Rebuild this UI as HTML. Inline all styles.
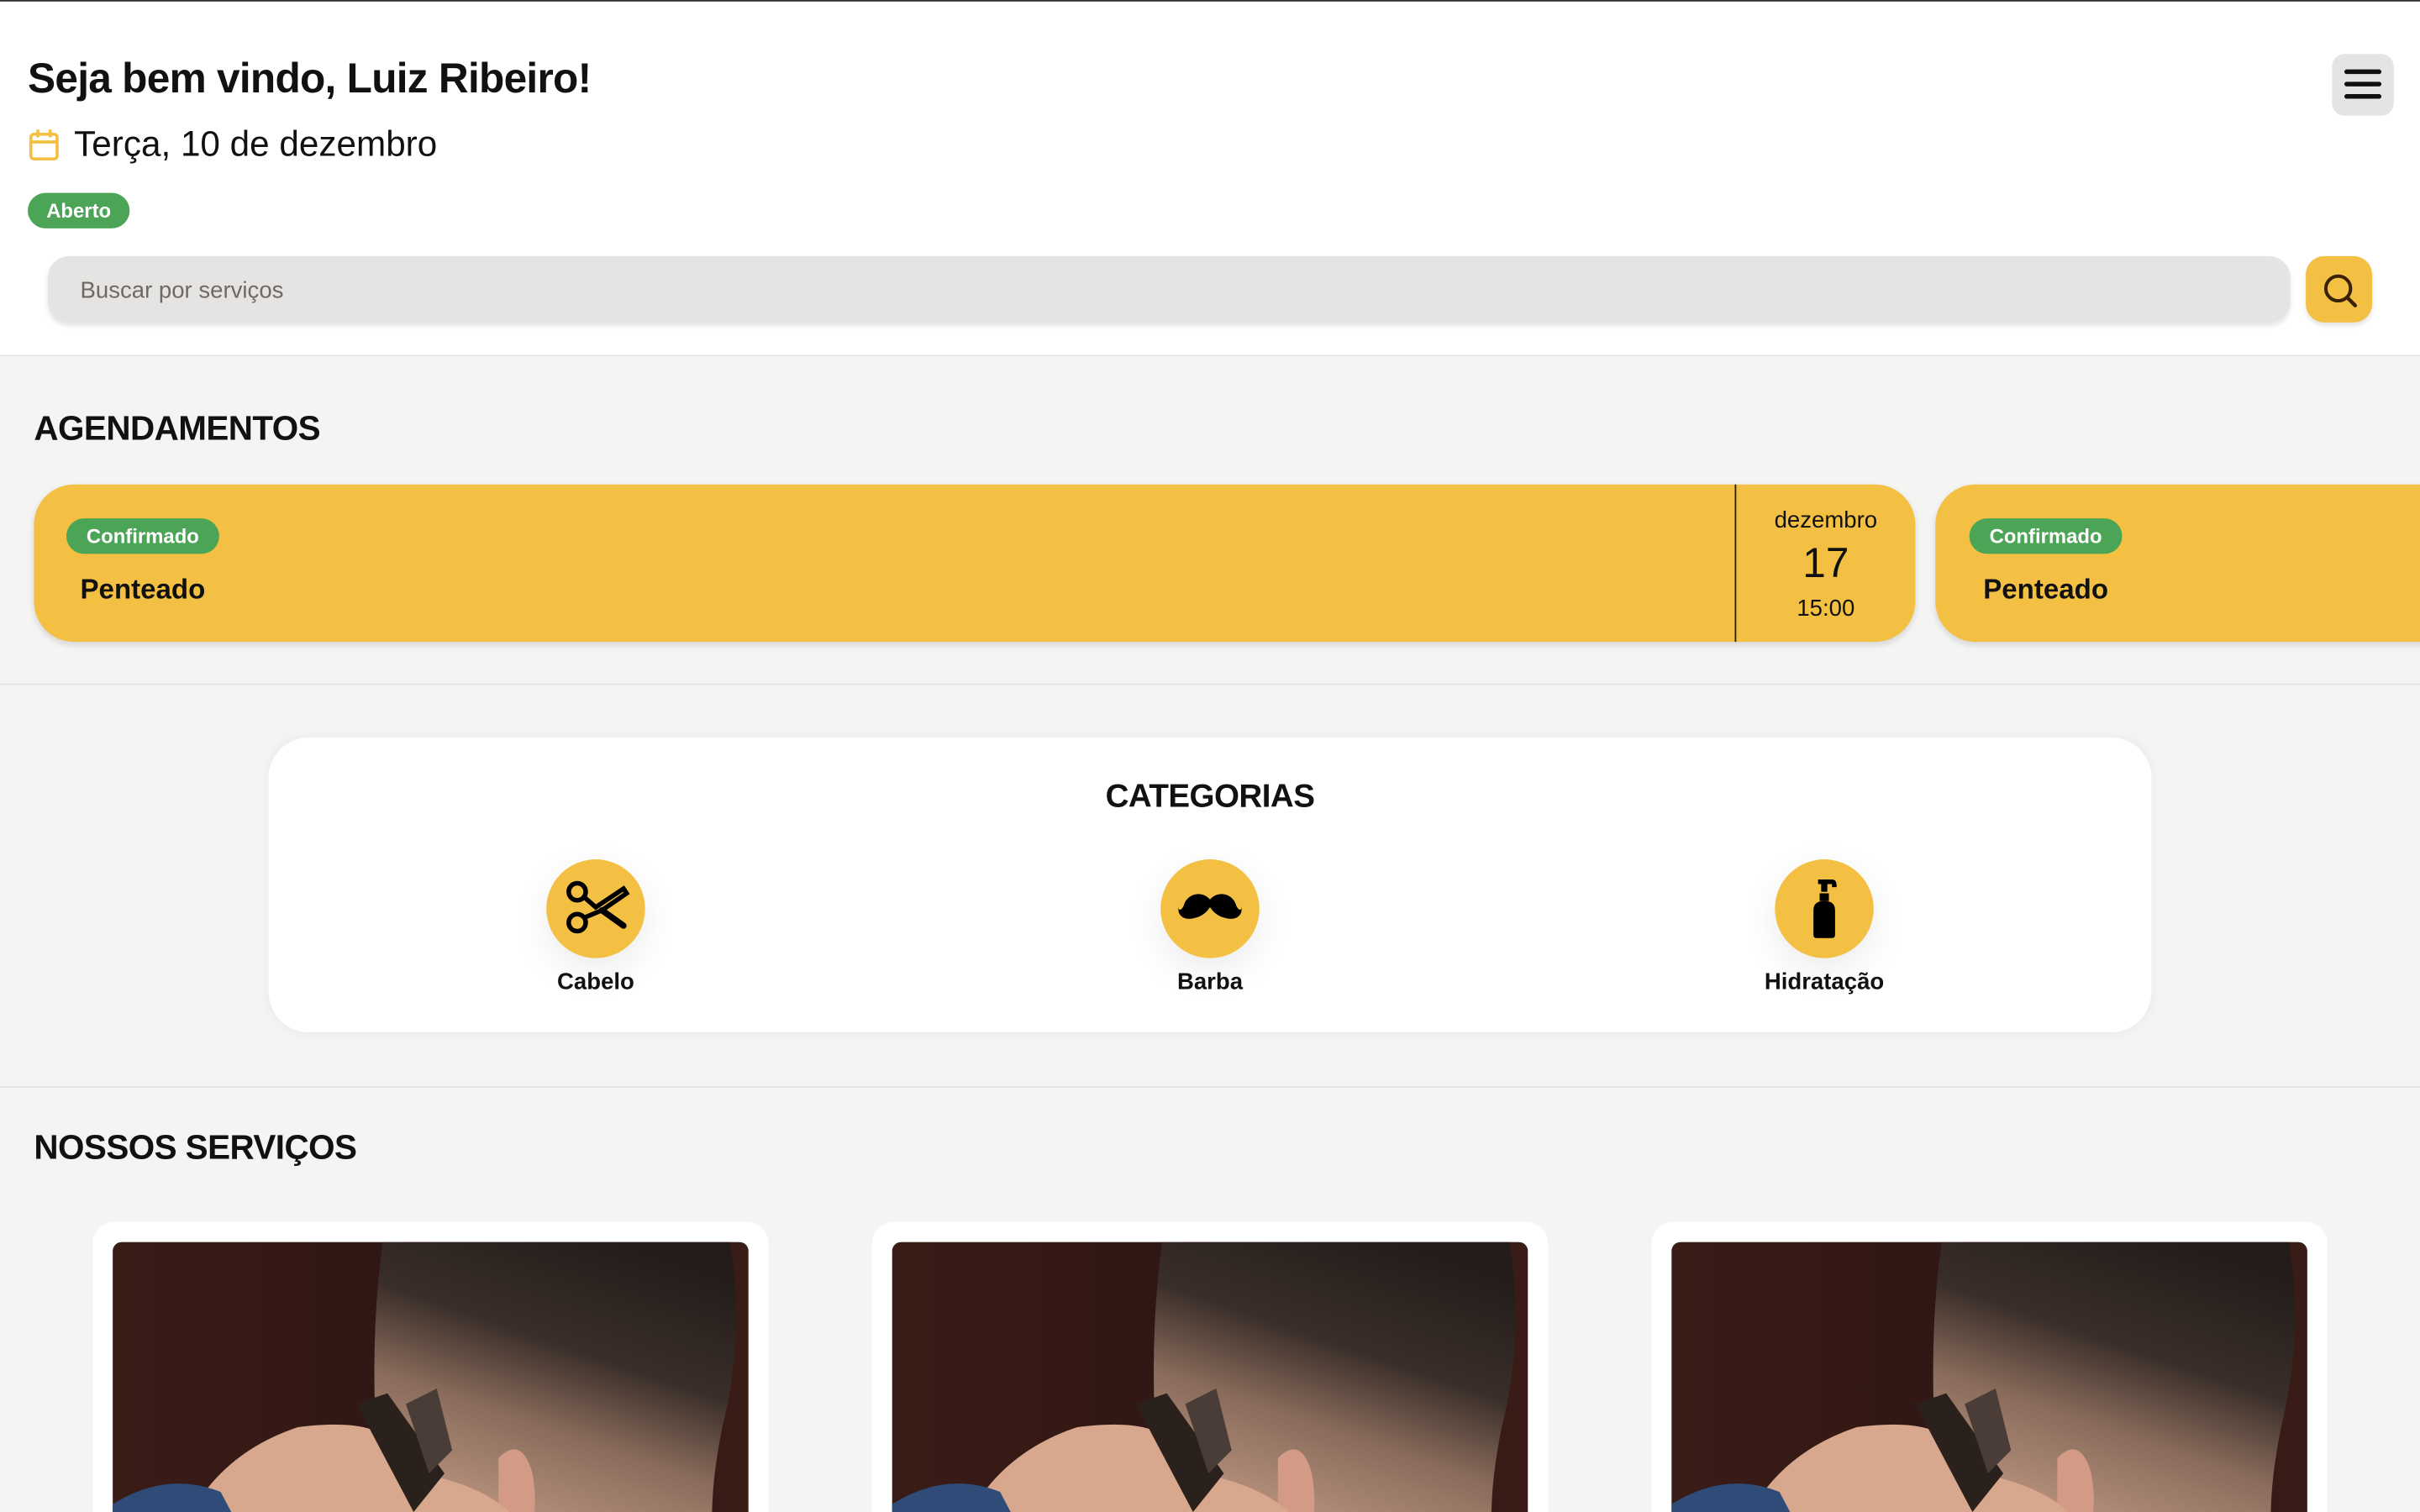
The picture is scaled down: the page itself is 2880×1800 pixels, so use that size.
<!DOCTYPE html>
<html><head><meta charset="utf-8">
<style>
html,body{margin:0;padding:0;width:2880px;height:1800px;overflow:hidden;background:#f4f4f3}
#w{width:1568px;height:980px;transform:scale(1.836735);transform-origin:0 0;position:relative;font-family:"Liberation Sans",sans-serif;color:#111;background:#f4f4f3;overflow:hidden}
.a{position:absolute}
.hdr{left:0;top:0;width:1568px;height:231px;background:#fff;border-top:1px solid #333;box-sizing:border-box;border-bottom:1px solid #e4e4e4}
.badge{background:#4ca456;color:#fff;font-weight:bold;border-radius:12px;font-size:13px;text-align:center}
.card{background:#f3c043;border-radius:26px;box-shadow:0 2px 4px rgba(0,0,0,.12)}
.cat{width:64px;height:64px;border-radius:50%;background:#f3c043;box-shadow:0 8px 24px rgba(0,0,0,.08)}
.catl{font-weight:bold;font-size:15px;text-align:center;width:200px}
.svc{background:#fff;border-radius:14px 14px 0 0;width:438px;height:188px;top:792px;overflow:hidden}
.img{left:13px;top:13px;width:412px;height:200px;border-radius:6px;overflow:hidden}
</style></head><body><div id="w">
<div class="a hdr"></div>
<div class="a" style="left:18px;top:36px;font-size:27px;font-weight:bold;letter-spacing:-0.4px">Seja bem vindo, Luiz Ribeiro!</div>
<svg class="a" style="left:18px;top:83px" width="21" height="22" viewBox="0 0 21 22"><rect x="2" y="4" width="17" height="16" rx="2" fill="none" stroke="#f3c043" stroke-width="2"/><line x1="2" y1="9" x2="19" y2="9" stroke="#f3c043" stroke-width="2"/><line x1="6.5" y1="1" x2="6.5" y2="6" stroke="#f3c043" stroke-width="2"/><line x1="14.5" y1="1" x2="14.5" y2="6" stroke="#f3c043" stroke-width="2"/></svg>
<div class="a" style="left:48px;top:80px;font-size:23px">Terça, 10 de dezembro</div>
<div class="a badge" style="left:18px;top:125px;width:66px;height:23px;line-height:23px">Aberto</div>
<div class="a" style="left:1511px;top:35px;width:40px;height:40px;border-radius:8px;background:#e5e4e2"></div>
<div class="a" style="left:1519px;top:45px;width:24px;height:3px;background:#111;border-radius:2px;box-shadow:0 8px 0 #111,0 16px 0 #111"></div>
<div class="a" style="left:31px;top:166px;width:1453px;height:43px;border-radius:14px;background:#e5e4e2;box-shadow:0 2px 3px rgba(0,0,0,.1)"></div>
<div class="a" style="left:52px;top:180px;font-size:15px;color:#6d6a66">Buscar por serviços</div>
<div class="a" style="left:1494px;top:166px;width:43px;height:43px;border-radius:12px;background:#f3c043;box-shadow:0 2px 3px rgba(0,0,0,.1)"></div>
<svg class="a" style="left:1503px;top:175px" width="26" height="26" viewBox="0 0 26 26"><circle cx="12" cy="12" r="8" fill="none" stroke="#3a2208" stroke-width="2.2"/><line x1="18" y1="18" x2="23" y2="23" stroke="#3a2208" stroke-width="2.4" stroke-linecap="round"/></svg>

<div class="a" style="left:22px;top:265px;font-size:22px;font-weight:bold;letter-spacing:-0.3px">AGENDAMENTOS</div>
<div class="a card" style="left:22px;top:314px;width:1219px;height:102px"></div>
<div class="a" style="left:1124px;top:314px;width:1px;height:102px;background:#222"></div>
<div class="a badge" style="left:43px;top:336px;width:99px;height:23px;line-height:23px">Confirmado</div>
<div class="a" style="left:52px;top:372px;font-size:18px;font-weight:bold">Penteado</div>
<div class="a" style="left:1125px;top:329px;width:116px;text-align:center;font-size:15px">dezembro</div>
<div class="a" style="left:1125px;top:350px;width:116px;text-align:center;font-size:27px">17</div>
<div class="a" style="left:1125px;top:386px;width:116px;text-align:center;font-size:15px">15:00</div>
<div class="a card" style="left:1254px;top:314px;width:400px;height:102px"></div>
<div class="a badge" style="left:1276px;top:336px;width:99px;height:23px;line-height:23px">Confirmado</div>
<div class="a" style="left:1285px;top:372px;font-size:18px;font-weight:bold">Penteado</div>

<div class="a" style="left:0;top:443px;width:1568px;height:1px;background:#e4e4e8"></div>
<div class="a" style="left:174px;top:478px;width:1220px;height:191px;background:#fff;border-radius:26px;box-shadow:0 0 8px rgba(0,0,0,.05)"></div>
<div class="a" style="left:174px;top:505px;width:1220px;text-align:center;font-size:21px;font-weight:bold;letter-spacing:-0.3px">CATEGORIAS</div>
<div class="a cat" style="left:354px;top:557px"></div>
<svg class="a" style="left:364px;top:568px" width="44" height="42" viewBox="0 0 44 42"><circle cx="10" cy="10" r="5.5" fill="none" stroke="#000" stroke-width="3"/><circle cx="10" cy="30" r="5.5" fill="none" stroke="#000" stroke-width="3"/><path d="M14 13 L22 20 L40 8 L42 11 L26 22 L14 27" fill="none" stroke="#000" stroke-width="3"/><path d="M26 22 L40 32" stroke="#000" stroke-width="4" stroke-linecap="round"/></svg>
<div class="a catl" style="left:286px;top:628px">Cabelo</div>
<div class="a cat" style="left:752px;top:557px"></div>
<svg class="a" style="left:763px;top:577px" width="42" height="22" viewBox="0 0 42 22"><path d="M21 6 C16 0 6 2 4 10 C2 14 0 13 1 10 C-1 16 4 20 11 18 C16 17 19 14 21 11 C23 14 26 17 31 18 C38 20 43 16 41 10 C42 13 40 14 38 10 C36 2 26 0 21 6 Z" fill="#000"/></svg>
<div class="a catl" style="left:684px;top:628px">Barba</div>
<div class="a cat" style="left:1150px;top:557px"></div>
<svg class="a" style="left:1170px;top:568px" width="24" height="42" viewBox="0 0 24 42"><path d="M8 2 H17 Q20 2 20 6 V7 H17 V5 H14 V10 H10 V5 H8 Z" fill="#000"/><rect x="9" y="11" width="6" height="5" fill="#000"/><path d="M5 22 Q5 16 12 16 Q19 16 19 22 V38 Q19 40 17 40 H7 Q5 40 5 38 Z" fill="#000"/></svg>
<div class="a catl" style="left:1082px;top:628px">Hidratação</div>

<div class="a" style="left:0;top:704px;width:1568px;height:1px;background:#e4e4e8"></div>
<div class="a" style="left:22px;top:731px;font-size:22px;font-weight:bold;letter-spacing:-0.3px">NOSSOS SERVIÇOS</div>

<svg width="0" height="0" style="position:absolute"><defs>
<linearGradient id="bg" x1="0" x2="1"><stop offset="0" stop-color="#3a1c17"/><stop offset=".6" stop-color="#2c1512"/><stop offset="1" stop-color="#3a1c17"/></linearGradient>
<linearGradient id="hd" x1="0.7" y1="0" x2="0.3" y2="1"><stop offset="0" stop-color="#231c1a"/><stop offset=".35" stop-color="#3a2e29"/><stop offset=".6" stop-color="#8a6c5c"/><stop offset="1" stop-color="#c8a08a"/></linearGradient>
<g id="ph"><rect width="412" height="200" fill="url(#bg)"/>
<path d="M175 0 H400 Q410 60 395 120 Q385 170 390 200 H190 Q175 150 170 110 Q168 50 175 0 Z" fill="url(#hd)"/>
<path d="M250 140 Q265 125 272 150 Q278 185 262 200 L250 200 Z" fill="#d39a86"/>
<path d="M40 200 Q60 140 120 120 Q160 115 175 125 L200 150 Q250 160 265 185 L255 200 Z" fill="#d8a88e"/>
<path d="M158 105 L178 98 L215 150 L195 175 Z" fill="#2a201c"/>
<path d="M190 105 L210 95 L220 135 L205 150 Z" fill="#4a3c36"/>
<path d="M0 200 V170 Q35 148 70 162 L90 200 Z" fill="#2f4b78"/></g></defs></svg>

<div class="a svc" style="left:60px"><svg class="a img" viewBox="0 0 412 200"><use href="#ph"/></svg></div>
<div class="a svc" style="left:565px"><svg class="a img" viewBox="0 0 412 200"><use href="#ph"/></svg></div>
<div class="a svc" style="left:1070px"><svg class="a img" viewBox="0 0 412 200"><use href="#ph"/></svg></div>
</div></body></html>
